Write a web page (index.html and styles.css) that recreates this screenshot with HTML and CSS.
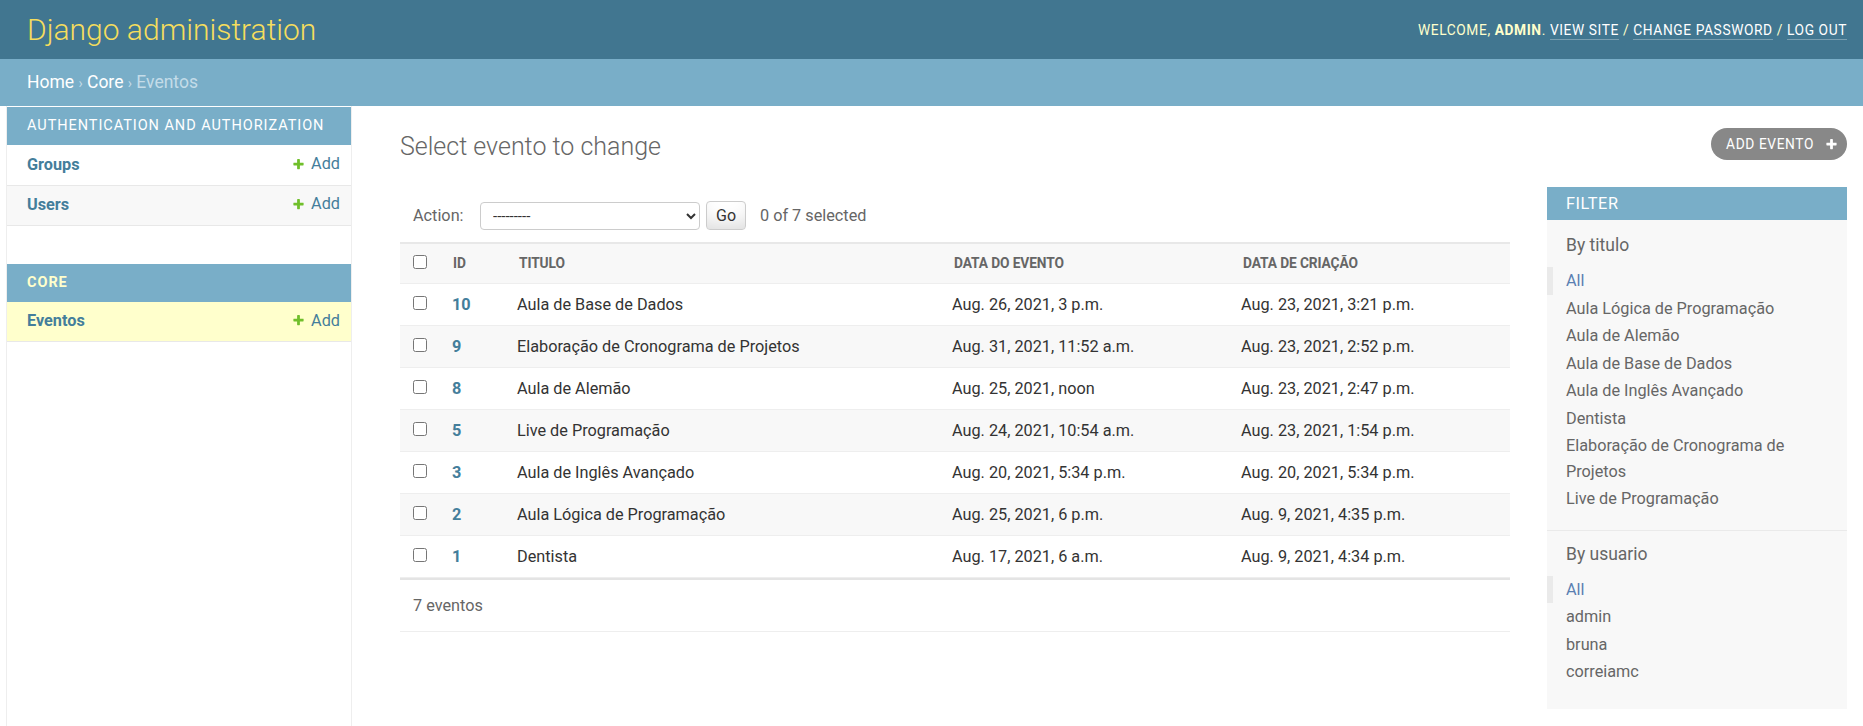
FILE: index.html
```html
<!DOCTYPE html>
<html lang="en">
<head>
<meta charset="utf-8">
<title>Select evento to change | Django site admin</title>
<link rel="stylesheet" href="styles.css">
</head>
<body>
<header class="header">
  <div class="branding">Django administration</div>
  <div class="user-tools">Welcome, <strong>admin</strong>. <a href="#">View site</a> / <a href="#">Change password</a> / <a href="#">Log out</a></div>
</header>
<div class="breadcrumbs"><a href="#">Home</a> <span class="sep">›</span> <a href="#">Core</a> <span class="sep">›</span> Eventos</div>
<div class="main">
  <div class="toggle-strip"></div>
  <nav class="nav-sidebar">
    <table class="app-module">
      <caption class="app-caption">Authentication and Authorization</caption>
      <tr class="app-row"><th class="model-name"><a href="#">Groups</a></th><td class="model-add"><a href="#" class="addlink"><svg class="plus" viewBox="0 0 1792 1792"><path d="M1600 736v192q0 40-28 68t-68 28h-416v416q0 40-28 68t-68 28h-192q-40 0-68-28t-28-68v-416h-416q-40 0-68-28t-28-68v-192q0-40 28-68t68-28h416v-416q0-40 28-68t68-28h192q40 0 68 28t28 68v416h416q40 0 68 28t28 68z"/></svg>Add</a></td></tr>
      <tr class="app-row row-alt"><th class="model-name"><a href="#">Users</a></th><td class="model-add"><a href="#" class="addlink"><svg class="plus" viewBox="0 0 1792 1792"><path d="M1600 736v192q0 40-28 68t-68 28h-416v416q0 40-28 68t-68 28h-192q-40 0-68-28t-28-68v-416h-416q-40 0-68-28t-28-68v-192q0-40 28-68t68-28h416v-416q0-40 28-68t68-28h192q40 0 68 28t28 68v416h416q40 0 68 28t28 68z"/></svg>Add</a></td></tr>
    </table>
    <table class="app-module">
      <caption class="app-caption current-app">Core</caption>
      <tr class="app-row current-model"><th class="model-name"><a href="#">Eventos</a></th><td class="model-add"><a href="#" class="addlink"><svg class="plus" viewBox="0 0 1792 1792"><path d="M1600 736v192q0 40-28 68t-68 28h-416v416q0 40-28 68t-68 28h-192q-40 0-68-28t-28-68v-416h-416q-40 0-68-28t-28-68v-192q0-40 28-68t68-28h416v-416q0-40 28-68t68-28h192q40 0 68 28t28 68v416h416q40 0 68 28t28 68z"/></svg>Add</a></td></tr>
    </table>
  </nav>
  <div class="content">
    <div class="content-head">
      <h1 class="page-title">Select evento to change</h1>
      <a href="#" class="object-tool">Add evento<svg class="tool-plus" viewBox="0 0 1792 1792"><path d="M1600 736v192q0 40-28 68t-68 28h-416v416q0 40-28 68t-68 28h-192q-40 0-68-28t-28-68v-416h-416q-40 0-68-28t-28-68v-192q0-40 28-68t68-28h416v-416q0-40 28-68t68-28h192q40 0 68 28t28 68v416h416q40 0 68 28t28 68z"/></svg></a>
    </div>
    <div class="changelist">
      <div class="form-container">
        <div class="actions">
          <label class="action-label">Action:</label>
          <select class="action-select"><option>---------</option></select>
          <button class="go-button" type="button">Go</button>
          <span class="action-counter">0 of 7 selected</span>
        </div>
        <table class="results">
          <thead>
            <tr>
              <th class="col-check"><input type="checkbox" class="cb"></th>
              <th class="col-id">ID</th>
              <th class="col-titulo">Titulo</th>
              <th class="col-data">Data do evento</th>
              <th class="col-criacao">Data de criação</th>
            </tr>
          </thead>
          <tbody>
            <tr><td class="cell-check"><input type="checkbox" class="cb"></td><td class="cell-id"><a href="#">10</a></td><td>Aula de Base de Dados</td><td>Aug. 26, 2021, 3 p.m.</td><td>Aug. 23, 2021, 3:21 p.m.</td></tr>
            <tr class="row2"><td class="cell-check"><input type="checkbox" class="cb"></td><td class="cell-id"><a href="#">9</a></td><td>Elaboração de Cronograma de Projetos</td><td>Aug. 31, 2021, 11:52 a.m.</td><td>Aug. 23, 2021, 2:52 p.m.</td></tr>
            <tr><td class="cell-check"><input type="checkbox" class="cb"></td><td class="cell-id"><a href="#">8</a></td><td>Aula de Alemão</td><td>Aug. 25, 2021, noon</td><td>Aug. 23, 2021, 2:47 p.m.</td></tr>
            <tr class="row2"><td class="cell-check"><input type="checkbox" class="cb"></td><td class="cell-id"><a href="#">5</a></td><td>Live de Programação</td><td>Aug. 24, 2021, 10:54 a.m.</td><td>Aug. 23, 2021, 1:54 p.m.</td></tr>
            <tr><td class="cell-check"><input type="checkbox" class="cb"></td><td class="cell-id"><a href="#">3</a></td><td>Aula de Inglês Avançado</td><td>Aug. 20, 2021, 5:34 p.m.</td><td>Aug. 20, 2021, 5:34 p.m.</td></tr>
            <tr class="row2"><td class="cell-check"><input type="checkbox" class="cb"></td><td class="cell-id"><a href="#">2</a></td><td>Aula Lógica de Programação</td><td>Aug. 25, 2021, 6 p.m.</td><td>Aug. 9, 2021, 4:35 p.m.</td></tr>
            <tr><td class="cell-check"><input type="checkbox" class="cb"></td><td class="cell-id"><a href="#">1</a></td><td>Dentista</td><td>Aug. 17, 2021, 6 a.m.</td><td>Aug. 9, 2021, 4:34 p.m.</td></tr>
          </tbody>
        </table>
        <p class="paginator">7 eventos</p>
      </div>
      <div class="filter">
        <h2 class="filter-title">Filter</h2>
        <h3 class="filter-heading">By titulo</h3>
        <ul class="filter-list">
          <li class="selected"><a href="#">All</a></li>
          <li><a href="#">Aula Lógica de Programação</a></li>
          <li><a href="#">Aula de Alemão</a></li>
          <li><a href="#">Aula de Base de Dados</a></li>
          <li><a href="#">Aula de Inglês Avançado</a></li>
          <li><a href="#">Dentista</a></li>
          <li><a href="#">Elaboração de Cronograma de Projetos</a></li>
          <li><a href="#">Live de Programação</a></li>
        </ul>
        <h3 class="filter-heading">By usuario</h3>
        <ul class="filter-list last">
          <li class="selected"><a href="#">All</a></li>
          <li><a href="#">admin</a></li>
          <li><a href="#">bruna</a></li>
          <li><a href="#">correiamc</a></li>
        </ul>
      </div>
    </div>
  </div>
</div>
</body>
</html>
```
FILE: styles.css
```css
* { box-sizing: border-box; }
html, body { margin: 0; padding: 0; }
body {
  font-family: Roboto, "Liberation Sans", "DejaVu Sans", sans-serif;
  font-size: 16.25px;
  color: #333;
  background: #fff;
  height: 726px;
  overflow: hidden;
  display: flex;
  flex-direction: column;
}
a { text-decoration: none; color: #447e9b; }

.header {
  flex: 0 0 59px;
  background: #417690;
  display: flex;
  align-items: center;
  justify-content: space-between;
  padding: 0 16px 0 27px;
}
.branding {
  font-size: 30px;
  font-weight: 300;
  color: #f5dd5d;
  line-height: 36px;
}
.user-tools {
  font-size: 13.75px;
  letter-spacing: 0.6px;
  text-transform: uppercase;
  color: #ffc;
  line-height: 20px;
}
.user-tools strong { font-weight: 700; }
.user-tools a {
  color: #fff;
  border-bottom: 1px solid rgba(255,255,255,0.3);
  padding-bottom: 1px;
}

.breadcrumbs {
  flex: 0 0 46px;
  background: #79aec8;
  color: #c4dce8;
  font-size: 17.5px;
  line-height: 22px;
  padding: 12px 27px;
}
.breadcrumbs a { color: #fff; }
.breadcrumbs .sep { font-size: 14px; }

.main {
  flex: 1 1 auto;
  display: flex;
  align-items: stretch;
}
.toggle-strip {
  flex: 0 0 7px;
  border-right: 1px solid #eee;
}
.nav-sidebar {
  flex: 0 0 345px;
  border-right: 1px solid #eee;
  padding-top: 1px;
}
.app-module {
  width: 100%;
  border-collapse: collapse;
  margin-bottom: 38px;
}
.app-caption {
  background: #79aec8;
  color: #fff;
  text-align: left;
  text-transform: uppercase;
  font-size: 14.5px;
  letter-spacing: 0.95px;
  line-height: 18px;
  padding: 10px 20px;
}
.app-caption.current-app { color: #ffc; font-weight: 700; }
.app-row { border-bottom: 1px solid #e8e8e8; }
.app-row.row-alt { background: #f8f8f8; }
.app-row.current-model { background: #ffc; }
.model-name {
  text-align: left;
  padding: 0 20px;
  height: 40px;
  line-height: 20px;
  font-size: 16.25px;
}
.model-name a { font-weight: 700; color: #447e9b; }
.model-add {
  text-align: right;
  padding: 0 11px 0 10px;
  height: 40px;
  line-height: 20px;
  width: 90px;
}
.addlink { color: #447e9b; display: inline-flex; align-items: center; font-size: 16.25px; }
.plus { width: 13px; height: 13px; fill: #70bf2b; margin-right: 6px; }

.content {
  flex: 1 1 auto;
  padding: 25px 16px 0 48px;
  min-width: 0;
}
.content-head {
  display: flex;
  justify-content: space-between;
  align-items: flex-start;
  height: 56px;
}
.page-title {
  margin: 0;
  font-size: 25px;
  font-weight: 300;
  color: #666;
  line-height: 31px;
}
.object-tool {
  margin-top: -3px;
  display: flex;
  align-items: center;
  height: 32px;
  padding: 0 9px 0 15px;
  background: #888;
  color: #fff;
  border-radius: 16px;
  font-size: 13.75px;
  letter-spacing: 0.6px;
  text-transform: uppercase;
}
.tool-plus { width: 13px; height: 13px; fill: #fff; margin-left: 11px; }

.changelist {
  display: flex;
  align-items: flex-start;
}
.form-container { flex: 1 1 auto; min-width: 0; }
.actions {
  display: flex;
  align-items: center;
  padding: 13px 12px 11px 13px;
  height: 55px;
  color: #666;
}
.action-label { width: 51px; }
.action-select {
  margin-left: 16px;
  width: 220px;
  height: 28px;
  border: 1px solid #ccc;
  border-radius: 4px;
  background: #fff;
  font-family: inherit;
  font-size: 15px;
  color: #333;
  padding: 0 6px 0 8px;
}
.go-button {
  margin-left: 6px;
  width: 40px;
  height: 29px;
  border: 1px solid #ccc;
  border-radius: 4px;
  background: #fff;
  box-shadow: inset 0 -15px 20px -10px rgba(0,0,0,0.15);
  font-family: inherit;
  font-size: 16px;
  color: #333;
  padding: 0;
}
.action-counter { margin-left: 14px; color: #666; }

.results {
  width: 100%;
  border-collapse: collapse;
  table-layout: fixed;
}
.results thead th {
  background: #f8f8f8;
  border-top: 2px solid #e8e8e8;
  border-bottom: 1px solid #eee;
  height: 40px;
  padding: 0 12px 0 14px;
  text-align: left;
  text-transform: uppercase;
  font-size: 13.75px;
  font-weight: 700;
  color: #666;
  letter-spacing: -0.1px;
}
.results .col-check { width: 40px; padding: 0; text-align: center; }
.results .col-id { width: 65px; padding-left: 13px; }
.results .col-titulo { width: 435px; }
.results .col-data { width: 289px; }
.results tbody td {
  border-bottom: 1px solid #eee;
  padding: 10px 12px;
  line-height: 21px;
  height: 42px;
  vertical-align: middle;
  white-space: nowrap;
}
.results tbody tr.row2 td { background: #f8f8f8; }
.results td.cell-check { padding: 0; text-align: center; }
.results td.cell-id a { font-weight: 700; color: #447e9b; }
.cb { width: 14px; height: 14px; margin: 0; vertical-align: middle; position: relative; top: -2px; }

.paginator {
  margin: 0;
  border-top: 2px solid #e4e4e4;
  border-bottom: 1px solid #eee;
  padding: 12px 13px;
  line-height: 27px;
  color: #666;
}

.filter {
  flex: 0 0 300px;
  margin-left: 37px;
  background: #f8f8f8;
  padding-bottom: 6px;
}
.filter-title {
  margin: 0;
  background: #79aec8;
  color: #fff;
  font-size: 16.25px;
  font-weight: 400;
  text-transform: uppercase;
  letter-spacing: 0.6px;
  line-height: 21px;
  padding: 6px 19px;
}
.filter-heading {
  margin: 15px 0 11px;
  padding: 0 19px;
  font-size: 17.5px;
  font-weight: 400;
  color: #666;
  line-height: 21px;
}
.filter-list + .filter-heading { margin-top: 13px; }
.filter-list {
  list-style: none;
  margin: 0;
  padding: 0 19px 17px;
  border-bottom: 1px solid #eaeaea;
}
.filter-list.last { border-bottom: none; }
.filter-list li {
  padding: 1px 0;
  line-height: 25.5px;
}
.filter-list li a { color: #666; display: block; }
.filter-list li.selected {
  border-left: 6px solid #eaeaea;
  margin-left: -19px;
  padding-left: 13px;
}
.filter-list li.selected a { color: #5b80b2; }
```
